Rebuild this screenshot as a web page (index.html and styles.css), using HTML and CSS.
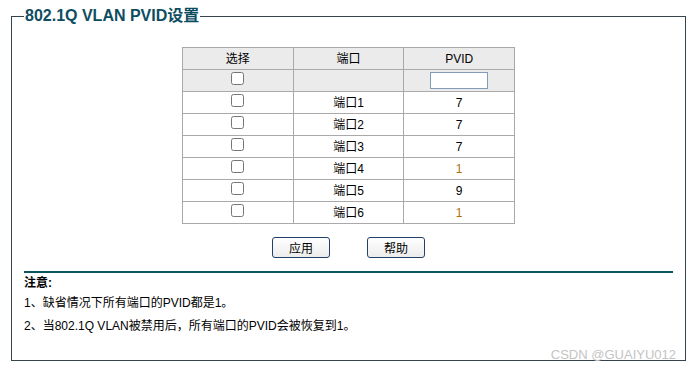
FILE: index.html
```html
<!DOCTYPE html>
<html lang="zh">
<head>
<meta charset="utf-8">
<link rel="stylesheet" href="styles.css">
</head>
<body>
<fieldset class="box">
  <legend class="title">802.1Q VLAN PVID设置</legend>
  <table class="grid">
    <tr class="head"><td>选择</td><td>端口</td><td>PVID</td></tr>
    <tr class="head"><td><input type="checkbox" class="cb"></td><td></td><td><input type="text" class="pvid-input"></td></tr>
    <tr><td><input type="checkbox" class="cb"></td><td>端口1</td><td>7</td></tr>
    <tr><td><input type="checkbox" class="cb"></td><td>端口2</td><td>7</td></tr>
    <tr><td><input type="checkbox" class="cb"></td><td>端口3</td><td>7</td></tr>
    <tr><td><input type="checkbox" class="cb"></td><td>端口4</td><td class="one">1</td></tr>
    <tr><td><input type="checkbox" class="cb"></td><td>端口5</td><td>9</td></tr>
    <tr><td><input type="checkbox" class="cb"></td><td>端口6</td><td class="one">1</td></tr>
  </table>
  <div class="actions">
    <button class="btn">应用</button>
    <button class="btn">帮助</button>
  </div>
  <div class="notes">
    <div class="rule"></div>
    <div class="note-title">注意:</div>
    <div class="note-line">1、缺省情况下所有端口的PVID都是1。</div>
    <div class="note-line">2、当802.1Q VLAN被禁用后，所有端口的PVID会被恢复到1。</div>
  </div>
</fieldset>
<div class="watermark">CSDN @GUAIYU012</div>
</body>
</html>
```

FILE: styles.css
```css
html, body {
  margin: 0;
  padding: 0;
  background: #ffffff;
}
body {
  font-family: "Liberation Sans", "Noto Sans CJK SC", Arial, sans-serif;
  font-size: 12px;
  color: #000;
  position: relative;
  width: 693px;
  height: 371px;
}
.box {
  box-sizing: border-box;
  margin: 6px 7px 0 11px;
  padding: 0 12px 22px 12px;
  border: 1px solid #34434c;
  min-width: 0;
}
.title {
  margin-left: 0;
  padding: 0 1px;
  font-size: 16px;
  font-weight: bold;
  line-height: 20px;
  color: #0e4d61;
}
.grid {
  border-collapse: collapse;
  margin: 21px auto 0;
  width: 333px;
  table-layout: fixed;
}
.grid td {
  border: 1px solid #a9a9a9;
  height: 21px;
  padding: 0;
  text-align: center;
  vertical-align: middle;
  line-height: 14px;
}
.head td {
  background: #ebebeb;
}
.one {
  color: #b07010;
}
.cb {
  margin: 0 0 4px 0;
  width: 13px;
  height: 13px;
  vertical-align: middle;
}
.pvid-input {
  box-sizing: border-box;
  width: 58px;
  height: 17px;
  margin: 0 0 1px 0;
  border: 1px solid #7f9db9;
  padding: 0;
  vertical-align: middle;
}
.actions {
  display: flex;
  justify-content: center;
  gap: 37px;
  margin-top: 13px;
}
.btn {
  box-sizing: border-box;
  width: 58px;
  height: 21px;
  padding: 0;
  border: 1px solid #21406a;
  border-radius: 3px;
  background: linear-gradient(#ffffff, #ececec);
  font-family: "Liberation Sans", "Noto Sans CJK SC", sans-serif;
  font-size: 12px;
  color: #000;
}
.notes {
  margin-top: 13px;
}
.rule {
  height: 2px;
  background: #0b5563;
}
.note-title {
  font-weight: bold;
  margin-top: 1px;
  line-height: 18px;
}
.note-line {
  line-height: 23px;
}
.watermark {
  position: absolute;
  right: 17px;
  top: 347px;
  font-size: 13px;
  color: #c4c4c4;
  font-family: "Liberation Sans", sans-serif;
}
```
